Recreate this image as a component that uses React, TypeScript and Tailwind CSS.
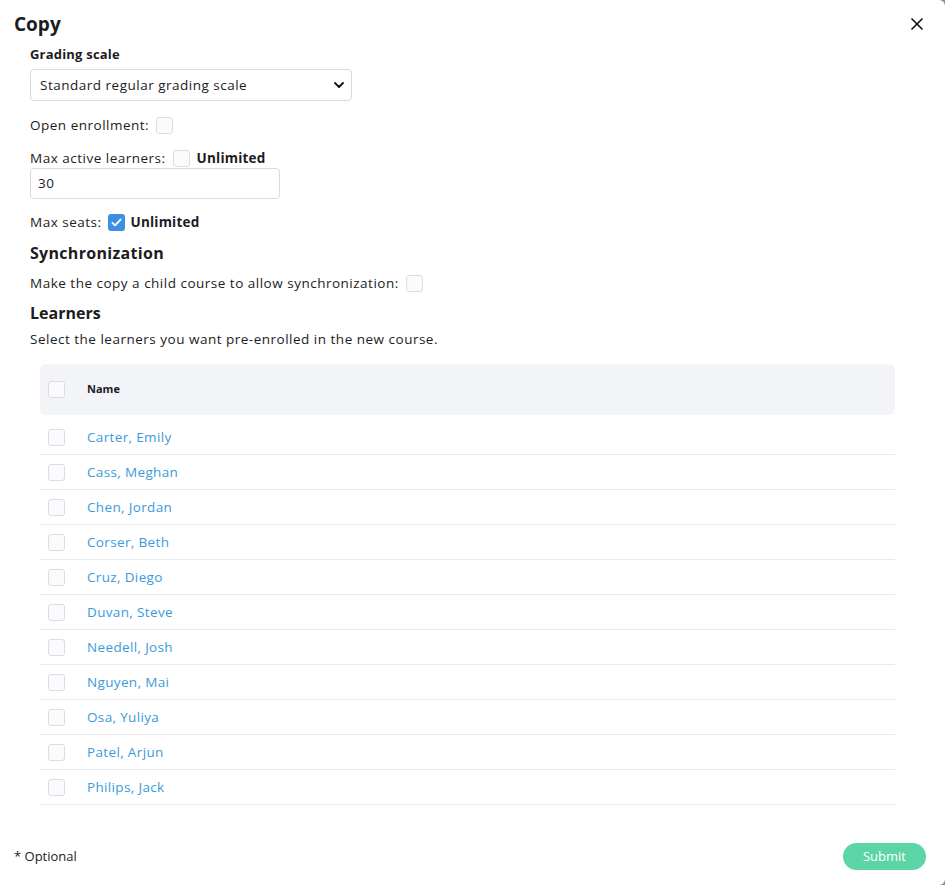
import { X } from 'lucide-react'

const LEARNERS = [
  'Carter, Emily',
  'Cass, Meghan',
  'Chen, Jordan',
  'Corser, Beth',
  'Cruz, Diego',
  'Duvan, Steve',
  'Needell, Josh',
  'Nguyen, Mai',
  'Osa, Yuliya',
  'Patel, Arjun',
  'Philips, Jack',
]

function Box({ checked = false }: { checked?: boolean }) {
  if (checked) {
    return (
      <span className="inline-flex h-[17px] w-[17px] shrink-0 items-center justify-center rounded-[3px] bg-[#3d8fe3]">
        <svg viewBox="0 0 16 16" className="h-[13px] w-[13px]" fill="none">
          <path d="M3 8.5l3.2 3L13 4.5" stroke="white" strokeWidth="2.4" strokeLinecap="round" strokeLinejoin="round" />
        </svg>
      </span>
    )
  }
  return <span className="inline-block h-[17px] w-[17px] shrink-0 rounded-[3px] border border-[#dcdde4] bg-[#fbfbfd]" />
}

export default function App() {
  return (
    <div className="h-[885px] w-[945px] bg-[#8e8e93]">
      <div
        className="relative flex h-full w-full flex-col rounded-r-[6px] bg-white text-[13.5px] tracking-[0.5px] text-[#1c1c1e]"
        style={{ fontFamily: '"Open Sans", "Noto Sans", sans-serif' }}
      >
        <div className="flex items-center justify-between pl-[14px] pr-[18px] pt-[11px]">
          <h1 className="text-[19px] font-bold leading-[26px] tracking-normal">Copy</h1>
          <X className="h-[20px] w-[20px] text-[#111]" strokeWidth={2} />
        </div>

        <div className="flex flex-col px-[30px]">
          <div className="mt-[8px] text-[13px] font-bold leading-[18px] tracking-[0.2px]">Grading scale</div>
          <div className="mt-[6px] flex h-[32px] w-[322px] items-center justify-between rounded-[4px] border border-[#d9dae1] pl-[9px] pr-[7px]">
            <span>Standard regular grading scale</span>
            <svg viewBox="0 0 10 6" className="h-[6px] w-[10px]" fill="none">
              <path d="M1 1l4 4 4-4" stroke="#111" strokeWidth="1.8" strokeLinecap="round" strokeLinejoin="round" />
            </svg>
          </div>

          <div className="mt-[15px] flex items-center gap-[7px] leading-[18px]">
            <span>Open enrollment:</span>
            <Box />
          </div>

          <div className="mt-[15px] flex items-center gap-[7px] leading-[18px]">
            <span>Max active learners:</span>
            <Box />
            <span className="font-bold tracking-[0.2px]">Unlimited</span>
          </div>
          <div className="mt-[1px] flex h-[31px] w-[250px] items-center rounded-[4px] border border-[#d9dae1] px-[7px]">
            30
          </div>

          <div className="mt-[14px] flex items-center gap-[6px] leading-[18px]">
            <span>Max seats:</span>
            <Box checked />
            <span className="font-bold tracking-[0.2px]">Unlimited</span>
          </div>

          <h2 className="mt-[11px] text-[16px] font-bold leading-[22px] tracking-[0.3px]">Synchronization</h2>
          <div className="mt-[10px] flex items-center gap-[7px] leading-[18px]">
            <span>Make the copy a child course to allow synchronization:</span>
            <Box />
          </div>

          <h2 className="mt-[10px] text-[16px] font-bold leading-[22px] tracking-normal">Learners</h2>
          <p className="mt-[6px] leading-[18px]">Select the learners you want pre-enrolled in the new course.</p>

          <div className="mt-[16px] ml-[10px] mr-[20px]">
            <div className="flex h-[51px] items-center gap-[22px] rounded-[6px] bg-[#f3f4f8] px-[8px]">
              <Box />
              <span className="text-[11px] font-bold tracking-normal">Name</span>
            </div>
            <div className="mt-[5px]">
              {LEARNERS.map((name) => (
                <div key={name} className="flex h-[35px] items-center gap-[22px] border-b border-[#e8e9ef] px-[8px]">
                  <Box />
                  <span className="text-[13.5px] tracking-[0.35px] text-[#3b9ad9]">{name}</span>
                </div>
              ))}
            </div>
          </div>
        </div>

        <div className="mt-auto flex items-center justify-between pb-[15px] pl-[14px] pr-[19px]">
          <span className="text-[13px] tracking-normal">* Optional</span>
          <button
            type="button"
            className="h-[27px] w-[83px] rounded-full bg-[#5cd5a6] text-[13px] tracking-normal text-white"
          >
            Submit
          </button>
        </div>
      </div>
    </div>
  )
}
